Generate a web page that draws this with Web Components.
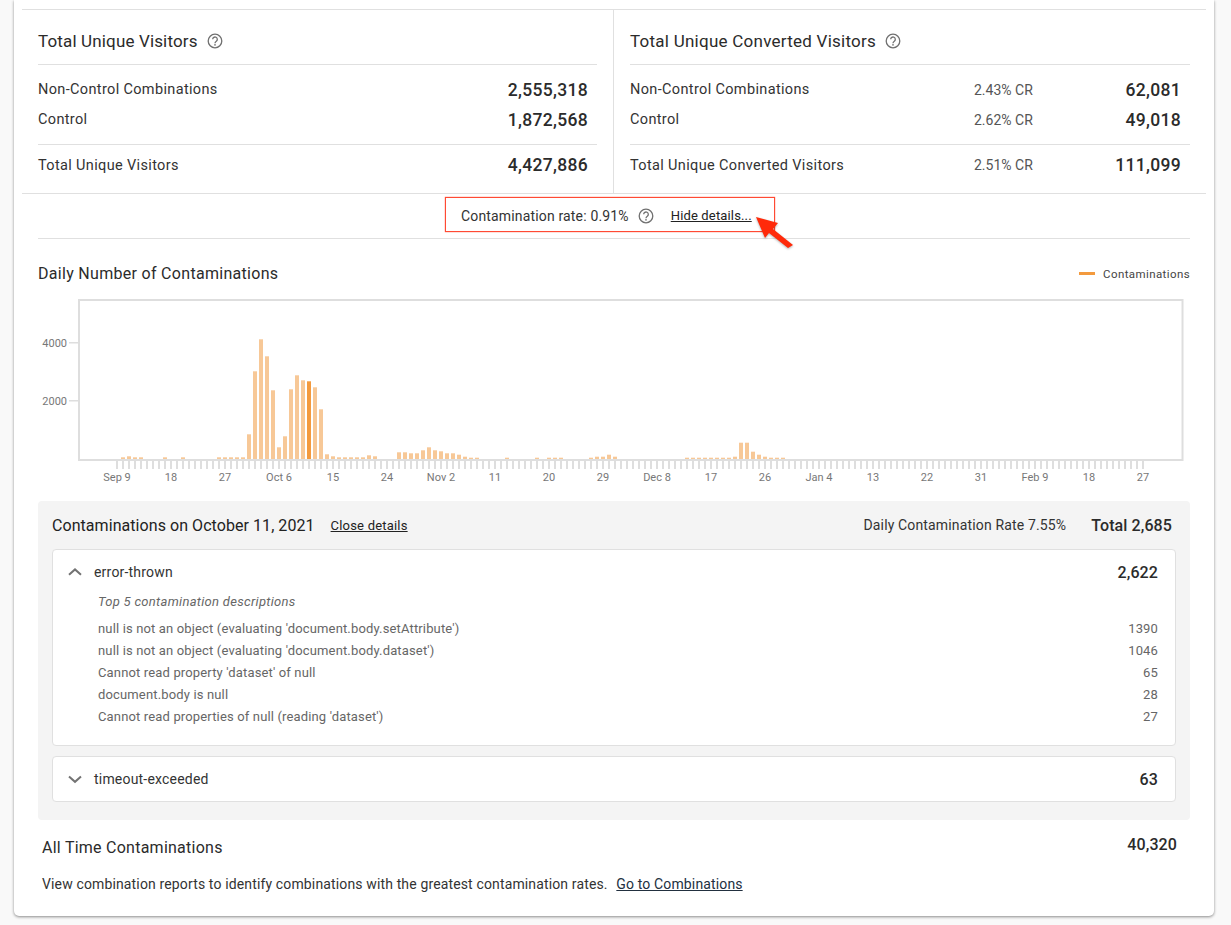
<!DOCTYPE html>
<html>
<head>
<meta charset="utf-8">
<title>Contaminations</title>
<style>
    html, body { margin: 0; height: 925px; overflow: hidden; background: #f9f9f9; }
    body { font-family: Roboto, "Liberation Sans", sans-serif; color: #333; }
    .stats { display: grid; grid-template-columns: 591px 1fr; }
    .stats stat-panel { padding: 0 16px; }
    .stats stat-panel[divided] { border-left: 1px solid #e0e0e0; }
</style>
</head>
<body>
<report-card>
    <div class="stats" slot="stats">
        <stat-panel title-text="Total Unique Visitors">
            <stat-row label="Non-Control Combinations" value="2,555,318"></stat-row>
            <stat-row label="Control" value="1,872,568"></stat-row>
            <stat-row slot="total" label="Total Unique Visitors" value="4,427,886"></stat-row>
        </stat-panel>
        <stat-panel title-text="Total Unique Converted Visitors" divided>
            <stat-row label="Non-Control Combinations" cr="2.43% CR" value="62,081"></stat-row>
            <stat-row label="Control" cr="2.62% CR" value="49,018"></stat-row>
            <stat-row slot="total" label="Total Unique Converted Visitors" cr="2.51% CR" value="111,099"></stat-row>
        </stat-panel>
    </div>
    <rate-bar slot="rate"></rate-bar>
    <daily-chart slot="chart"></daily-chart>
    <details-panel slot="details">
        <reason-card name="error-thrown" total="2,622" open>
            <desc-row text="null is not an object (evaluating 'document.body.setAttribute')" count="1390"></desc-row>
            <desc-row text="null is not an object (evaluating 'document.body.dataset')" count="1046"></desc-row>
            <desc-row text="Cannot read property 'dataset' of null" count="65"></desc-row>
            <desc-row text="document.body is null" count="28"></desc-row>
            <desc-row text="Cannot read properties of null (reading 'dataset')" count="27"></desc-row>
        </reason-card>
        <reason-card name="timeout-exceeded" total="63"></reason-card>
    </details-panel>
    <all-time slot="footer"></all-time>
</report-card>

<script>
const FONT = 'Roboto, "Liberation Sans", sans-serif';

class HelpIcon extends HTMLElement {
    constructor() {
        super();
        this.attachShadow({mode: 'open'}).innerHTML = `
            <style>
                :host { display: inline-flex; width: 16px; height: 16px; }
                svg { display: block; }
            </style>
            <svg width="16" height="16" viewBox="0 0 16 16" fill="none">
                <circle cx="8" cy="8" r="6.8" stroke="#707070" stroke-width="1.3"/>
                <path d="M5.7 6.3a2.3 2.3 0 1 1 3.6 1.9c-.9.6-1.3 1-1.3 2" stroke="#707070" stroke-width="1.3"/>
                <circle cx="8" cy="11.8" r=".85" fill="#707070"/>
            </svg>
        `;
    }
}

class ReportCard extends HTMLElement {
    constructor() {
        super();
        this.attachShadow({mode: 'open'}).innerHTML = `
            <style>
                :host {
                    display: block;
                    box-sizing: border-box;
                    width: 1200px;
                    height: 916px;
                    margin-left: 14px;
                    padding: 9px 8px 0;
                    background: #fff;
                    border-radius: 0 0 5px 5px;
                    box-shadow: 0 1px 3px rgba(0, 0, 0, .45);
                }
                .stats {
                    border-top: 1px solid #e0e0e0;
                    border-bottom: 1px solid #e0e0e0;
                }
                .inner { padding: 0 16px; }
            </style>
            <div class="stats"><slot name="stats"></slot></div>
            <slot name="rate"></slot>
            <div class="inner">
                <slot name="chart"></slot>
                <slot name="details"></slot>
                <slot name="footer"></slot>
            </div>
        `;
    }
}

class StatPanel extends HTMLElement {
    constructor() {
        super();
        this.attachShadow({mode: 'open'}).innerHTML = `
            <style>
                :host {
                    display: block;
                    box-sizing: border-box;
                    height: 183px;
                }
                h2 {
                    display: flex;
                    align-items: center;
                    gap: 9px;
                    box-sizing: border-box;
                    height: 55px;
                    padding-top: 8px;
                    margin: 0;
                    font: 400 17px ${FONT};
                    letter-spacing: .25px;
                    color: #2b2b2b;
                    border-bottom: 1px solid #e0e0e0;
                }
                :host(:not([divided])) h2 { letter-spacing: .15px; }
                .rows { padding: 9px 0; height: 61px; border-bottom: 1px solid #e0e0e0; }
            </style>
            <h2><span class="t"></span><help-icon></help-icon></h2>
            <div class="rows"><slot></slot></div>
            <slot name="total"></slot>
        `;
        this.shadowRoot.querySelector('.t').textContent = this.getAttribute('title-text');
    }
}

class StatRow extends HTMLElement {
    constructor() {
        super();
        this.attachShadow({mode: 'open'}).innerHTML = `
            <style>
                :host {
                    display: grid;
                    grid-template-columns: 1fr 70px 137px;
                    align-items: center;
                    height: 30px;
                    padding-right: 9px;
                    font: 400 14.5px/30px ${FONT};
                    letter-spacing: .35px;
                    color: #333;
                }
                :host([slot=total]) { height: 40px; }
                .lab { padding-top: 1px; }
                :host([slot=total]) .lab { padding-top: 2px; }
                .cr { font-size: 14px; letter-spacing: 0; color: #555; }
                .val { text-align: right; font-weight: 500; font-size: 17.5px; letter-spacing: .3px; color: #2b2b2b; }
            </style>
            <span class="lab"></span><span class="cr"></span><span class="val"></span>
        `;
        const q = s => this.shadowRoot.querySelector(s);
        q('.lab').textContent = this.getAttribute('label');
        q('.cr').textContent = this.getAttribute('cr') || '';
        q('.val').textContent = this.getAttribute('value');
    }
}

class RateBar extends HTMLElement {
    constructor() {
        super();
        this.attachShadow({mode: 'open'}).innerHTML = `
            <style>
                :host {
                    display: flex;
                    justify-content: center;
                    position: relative;
                    height: 45px;
                    margin: 0 16px;
                    padding: 3px 8px 0 0;
                    box-sizing: border-box;
                    border-bottom: 1px solid #e0e0e0;
                    font: 400 14px ${FONT};
                    letter-spacing: .16px;
                }
                .box {
                    display: flex;
                    align-items: center;
                    box-sizing: border-box;
                    width: 330px;
                    height: 35px;
                    padding: 2px 0 0 15px;
                    border: 1px solid #ff4a33;
                    box-shadow: 0 0 1px #ff4a33;
                    color: #333;
                }
                help-icon { margin: 0 17px 0 9px; }
                a { font-size: 13px; letter-spacing: .15px; color: #222; text-decoration: underline; }
                .arrow { position: absolute; left: 712px; top: 18px; filter: drop-shadow(0 1px 1px rgba(0,0,0,.3)); }
            </style>
            <div class="box">
                <span>Contamination rate: 0.91%</span>
                <help-icon></help-icon>
                <a>Hide details...</a>
            </div>
            <svg class="arrow" width="50" height="40" viewBox="0 0 50 40">
                <path d="M6 5L28 11 23 17 43 33 38 36 19 21 15 26Z" fill="#ff2a0a"/>
            </svg>
        `;
    }
}

// bar heights by day index, anything not listed has no bar
const BAR_DATA = {
    1:1.7,2:2.7,3:1.7,4:1.7,8:1.7,11:1.7,17:1.7,18:1.7,19:1.7,20:1.7,21:1.7,
    22:24.7,23:87.7,24:119.7,25:102.7,26:68.7,27:11.7,28:22.7,29:69.7,30:83.7,31:78.7,32:77.7,33:71.7,34:49.7,
    35:4.7,36:2.7,37:1.7,38:1.7,39:1.7,40:1.7,41:1.7,42:3.7,43:2.7,
    47:6.7,48:6.7,49:5.7,50:5.7,51:8.7,52:11.7,53:8.7,54:7.7,55:5.7,56:5.7,57:4.3,58:2.3,59:1.3,60:1.3,
    65:1.3,70:1.3,72:1.3,73:1.3,74:1.3,79:1.3,80:2.3,81:2.3,82:4.3,83:2.3,
    95:1.3,96:1.3,97:1.3,98:1.3,99:1.3,100:1.3,101:1.3,102:1.3,103:2.3,104:16.3,105:16.3,106:7.3,107:4.3,108:2.3,109:1.3,110:1.3,111:1.3
};
const AXIS_LABELS = ['Sep 9','18','27','Oct 6','15','24','Nov 2','11','20','29','Dec 8','17','26','Jan 4','13','22','31','Feb 9','18','27'];

class DailyChart extends HTMLElement {
    constructor() {
        super();
        // chart x origin is the left of the plot block, x=38 on the page
        let ticks = '', bars = '', labels = '';
        for (let i = 0; i < 172; i++) {
            const x = 79 + 6 * i;
            ticks += `<rect x="${x - 1}" y="161" width="2" height="9" fill="#dedede"/>`;
            if (BAR_DATA[i]) {
                const h = BAR_DATA[i];
                const color = i === 32 ? '#f39a3e' : '#f7c897';
                bars += `<rect x="${x - 2}" y="${160 - h}" width="4" height="${h}" fill="${color}"/>`;
            }
            if (i % 9 === 0) {
                labels += `<text x="${x}" y="182" text-anchor="middle">${AXIS_LABELS[i / 9]}</text>`;
            }
        }
        this.attachShadow({mode: 'open'}).innerHTML = `
            <style>
                :host { display: block; }
                .head {
                    display: flex;
                    justify-content: space-between;
                    align-items: center;
                    box-sizing: border-box;
                    height: 60px;
                    padding-top: 9px;
                }
                h3 { margin: 0; font: 400 16px ${FONT}; letter-spacing: .3px; color: #2b2b2b; }
                .legend { display: flex; align-items: center; gap: 8px; font: 400 11.5px ${FONT}; letter-spacing: .4px; color: #444; }
                .legend i { width: 16px; height: 3px; background: #f39a3e; }
                svg { display: block; }
                text { font: 400 11px ${FONT}; fill: #777; }
            </style>
            <div class="head">
                <h3>Daily Number of Contaminations</h3>
                <div class="legend"><i></i>Contaminations</div>
            </div>
            <svg width="1152" height="202" viewBox="0 0 1152 202">
                <rect x="41" y="1" width="1103.5" height="160" fill="none" stroke="#dedede" stroke-width="2"/>
                <rect x="31" y="43" width="9" height="1.5" fill="#dedede"/>
                <rect x="31" y="101" width="9" height="1.5" fill="#dedede"/>
                <text x="29" y="48" text-anchor="end">4000</text>
                <text x="29" y="106" text-anchor="end">2000</text>
                ${bars}${ticks}${labels}
            </svg>
        `;
    }
}

class DetailsPanel extends HTMLElement {
    constructor() {
        super();
        this.attachShadow({mode: 'open'}).innerHTML = `
            <style>
                :host {
                    display: block;
                    box-sizing: border-box;
                    height: 319px;
                    padding: 0 14px;
                    background: #f4f4f4;
                    border-radius: 4px;
                }
                .head {
                    display: flex;
                    align-items: center;
                    height: 48px;
                    font: 400 14px ${FONT};
                    color: #333;
                    letter-spacing: .15px;
                }
                h3 { margin: 0 16px 0 0; font: 400 16px ${FONT}; letter-spacing: .06px; color: #222; }
                a { font-size: 13px; letter-spacing: .2px; color: #222; text-decoration: underline; }
                .rate { margin-left: auto; }
                .total { margin-left: 25px; padding-right: 4px; font-weight: 500; font-size: 16px; letter-spacing: .1px; color: #2b2b2b; }
                .list { display: flex; flex-direction: column; gap: 10px; }
            </style>
            <div class="head">
                <h3>Contaminations on October 11, 2021</h3>
                <a>Close details</a>
                <span class="rate">Daily Contamination Rate 7.55%</span>
                <span class="total">Total 2,685</span>
            </div>
            <div class="list"><slot></slot></div>
        `;
    }
}

class ReasonCard extends HTMLElement {
    constructor() {
        super();
        const open = this.hasAttribute('open');
        const chevron = open ? 'M1 7.8L7 2.4 13 7.8' : 'M1 2.4L7 7.8 13 2.4';
        this.attachShadow({mode: 'open'}).innerHTML = `
            <style>
                :host {
                    display: block;
                    box-sizing: border-box;
                    background: #fff;
                    border: 1px solid #e0e0e0;
                    border-radius: 4px;
                    height: ${open ? 197 : 46}px;
                }
                .top {
                    display: flex;
                    align-items: center;
                    height: 44px;
                    padding: 0 17px 0 15px;
                    font: 400 14px ${FONT};
                    letter-spacing: .2px;
                    color: #333;
                }
                svg { margin-right: 12px; }
                .num { margin-left: auto; font-weight: 500; font-size: 16px; letter-spacing: .1px; color: #2b2b2b; }
                .sub { margin: 0 0 2px 45px; height: 22px; font: italic 400 13px/16px ${FONT}; letter-spacing: .3px; color: #666; }
                .rows { padding: 0 17px 0 45px; }
            </style>
            <div class="top">
                <svg width="14" height="10" viewBox="0 0 14 10" fill="none"><path d="${chevron}" stroke="#737373" stroke-width="2"/></svg>
                <span class="name"></span>
                <span class="num"></span>
            </div>
            ${open ? '<div class="sub">Top 5 contamination descriptions</div>' : ''}
            <div class="rows"><slot></slot></div>
        `;
        this.shadowRoot.querySelector('.name').textContent = this.getAttribute('name');
        this.shadowRoot.querySelector('.num').textContent = this.getAttribute('total');
    }
}

class DescRow extends HTMLElement {
    constructor() {
        super();
        this.attachShadow({mode: 'open'}).innerHTML = `
            <style>
                :host {
                    display: flex;
                    justify-content: space-between;
                    height: 22px;
                    font: 400 13px/22px ${FONT};
                    letter-spacing: .15px;
                    color: #666;
                }
            </style>
            <span class="t"></span><span class="c"></span>
        `;
        this.shadowRoot.querySelector('.t').textContent = this.getAttribute('text');
        this.shadowRoot.querySelector('.c').textContent = this.getAttribute('count');
    }
}

class AllTime extends HTMLElement {
    constructor() {
        super();
        this.attachShadow({mode: 'open'}).innerHTML = `
            <style>
                :host { display: block; padding: 16px 13px 0 4px; }
                .row {
                    display: flex;
                    justify-content: space-between;
                    align-items: flex-start;
                    height: 40px;
                    color: #2b2b2b;
                }
                h3 { margin: 3px 0 0; font: 400 16px/18px ${FONT}; letter-spacing: .25px; }
                .n { font: 500 16px/18px ${FONT}; letter-spacing: .1px; }
                p { margin: 0; font: 400 14px/16px ${FONT}; letter-spacing: .14px; color: #333; }
                a { margin-left: 5px; color: #22303f; text-decoration: underline; }
            </style>
            <div class="row"><h3>All Time Contaminations</h3><span class="n">40,320</span></div>
            <p>View combination reports to identify combinations with the greatest contamination rates. <a>Go to Combinations</a></p>
        `;
    }
}

window.customElements.define('help-icon', HelpIcon);
window.customElements.define('report-card', ReportCard);
window.customElements.define('stat-panel', StatPanel);
window.customElements.define('stat-row', StatRow);
window.customElements.define('rate-bar', RateBar);
window.customElements.define('daily-chart', DailyChart);
window.customElements.define('details-panel', DetailsPanel);
window.customElements.define('reason-card', ReasonCard);
window.customElements.define('desc-row', DescRow);
window.customElements.define('all-time', AllTime);
</script>
</body>
</html>
